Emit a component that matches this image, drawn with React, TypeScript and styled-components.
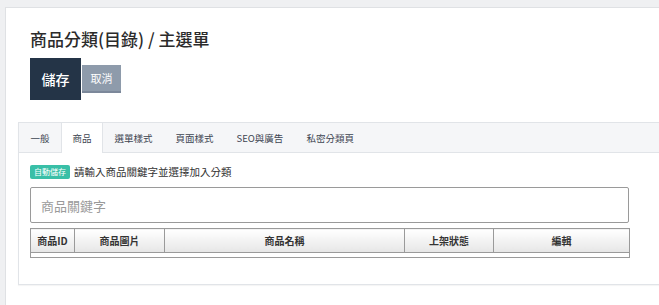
import React from "react";
import styled, { createGlobalStyle } from "styled-components";

const Global = createGlobalStyle`
  html, body { margin: 0; padding: 0; }
  body {
    background: #eff0f2;
    overflow: hidden;
    font-family: "Noto Sans CJK TC", "Noto Sans", "Liberation Sans", sans-serif;
    color: #333;
  }
  * { box-sizing: border-box; }
`;

const Page = styled.div`
  padding: 7px 0 0 5px;
`;

const Panel = styled.div`
  background: #fff;
  border: 1px solid #dfe1e4;
  border-right: none;
  border-bottom: none;
  min-height: 298px;
  padding: 0 0 0 12px;
`;

const Header = styled.div`
  padding: 19px 0 0 12px;
`;

const Title = styled.h1`
  margin: 0;
  font-size: 17px;
  line-height: 24px;
  font-weight: 500;
  color: #2b2b2b;
`;

const Actions = styled.div`
  display: flex;
  align-items: center;
  gap: 1px;
  margin-top: 7px;
`;

const Button = styled.button<{ $primary?: boolean }>`
  border: none;
  margin: 0;
  font-family: inherit;
  color: #fff;
  cursor: pointer;
  display: flex;
  align-items: center;
  justify-content: center;
  background: ${(p) => (p.$primary ? "#243447" : "#8e9bab")};
  width: ${(p) => (p.$primary ? "51px" : "39px")};
  height: ${(p) => (p.$primary ? "42px" : "28px")};
  font-size: ${(p) => (p.$primary ? "14px" : "11px")};
  font-weight: ${(p) => (p.$primary ? 500 : 400)};
  border-bottom: ${(p) => (p.$primary ? "none" : "2px solid #7c889a")};
  padding: 0;
`;

const Card = styled.div`
  margin-top: 22px;
  border: 1px solid #e1e4e8;
  border-right: none;
  box-shadow: 0 1px 1px rgba(0, 0, 0, 0.04);
`;

const TabBar = styled.div`
  display: flex;
  height: 30px;
  background: #f5f6f8;
  border-bottom: 1px solid #e1e4e8;
`;

const Tab = styled.div<{ $active?: boolean }>`
  display: flex;
  align-items: center;
  padding: 0 10.5px;
  font-size: 9.5px;
  color: #3d4552;
  border-left: 1px solid ${(p) => (p.$active ? "#e1e4e8" : "transparent")};
  border-right: 1px solid ${(p) => (p.$active ? "#e1e4e8" : "transparent")};
  background: ${(p) => (p.$active ? "#fff" : "transparent")};
  height: 30px;
  margin-bottom: -1px;
  white-space: nowrap;
`;

const Body = styled.div`
  padding: 12px 30px 26px 11px;
`;

const HintRow = styled.div`
  display: flex;
  align-items: center;
  gap: 4px;
  height: 14px;
`;

const Badge = styled.span`
  display: inline-flex;
  align-items: center;
  justify-content: center;
  height: 14px;
  width: 40px;
  background: #39bfa7;
  color: #fff;
  font-size: 8px;
  border-radius: 2px;
  line-height: 1;
`;

const Hint = styled.span`
  font-size: 10.5px;
  color: #333;
  line-height: 14px;
`;

const SearchInput = styled.input`
  display: block;
  width: 100%;
  height: 36px;
  margin-top: 8px;
  border: 1px solid #9a9a9a;
  border-radius: 2px;
  padding: 0 10px;
  font-family: inherit;
  font-size: 13px;
  color: #333;
  outline: none;
  &::placeholder { color: #9a9a9a; }
`;

const Table = styled.table`
  width: 100%;
  margin-top: 5px;
  border-collapse: collapse;
  table-layout: fixed;
  border: 1px solid #9a9a9a;
`;

const Th = styled.th`
  height: 24px;
  padding: 0;
  font-size: 10px;
  font-weight: 700;
  color: #333;
  text-align: center;
  border: 1px solid #9a9a9a;
  background: linear-gradient(#ffffff, #e6e6e6);
  white-space: nowrap;
`;

const Td = styled.td`
  height: 5px;
  padding: 0;
`;

const columns: { label: string; width: number }[] = [
  { label: "商品ID", width: 44 },
  { label: "商品圖片", width: 90 },
  { label: "商品名稱", width: 240 },
  { label: "上架狀態", width: 89 },
  { label: "編輯", width: 136 },
];

const tabs = ["一般", "商品", "選單樣式", "頁面樣式", "SEO與廣告", "私密分類頁"];

export default function App() {
  return (
    <>
      <Global />
      <Page>
        <Panel>
          <Header>
            <Title>商品分類(目錄) / 主選單</Title>
            <Actions>
              <Button $primary>儲存</Button>
              <Button>取消</Button>
            </Actions>
          </Header>
          <Card>
            <TabBar>
              {tabs.map((t) => (
                <Tab key={t} $active={t === "商品"}>
                  {t}
                </Tab>
              ))}
            </TabBar>
            <Body>
              <HintRow>
                <Badge>自動儲存</Badge>
                <Hint>請輸入商品關鍵字並選擇加入分類</Hint>
              </HintRow>
              <SearchInput placeholder="商品關鍵字" />
              <Table>
                <colgroup>
                  {columns.map((c) => (
                    <col key={c.label} style={{ width: c.width }} />
                  ))}
                </colgroup>
                <thead>
                  <tr>
                    {columns.map((c) => (
                      <Th key={c.label}>{c.label}</Th>
                    ))}
                  </tr>
                </thead>
                <tbody>
                  <tr>
                    <Td colSpan={5} />
                  </tr>
                </tbody>
              </Table>
            </Body>
          </Card>
        </Panel>
      </Page>
    </>
  );
}
